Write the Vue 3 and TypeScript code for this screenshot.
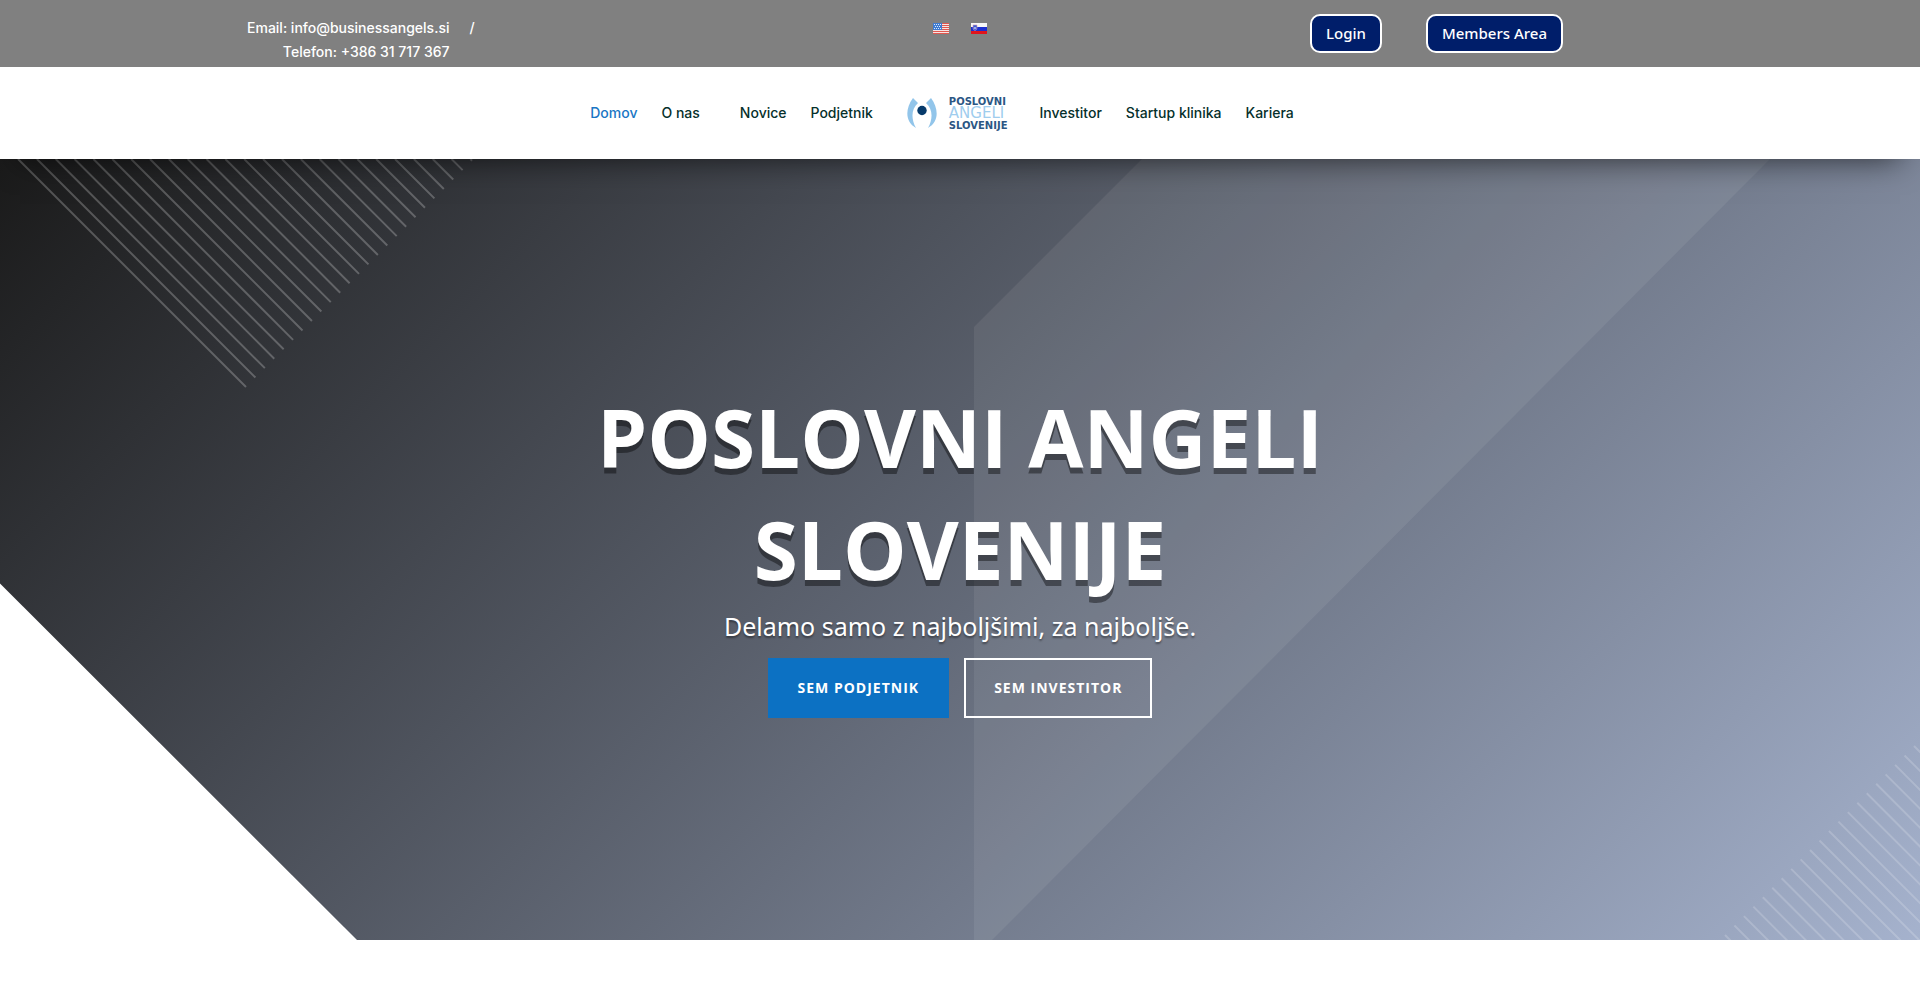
<script setup lang="ts">
interface NavLink {
  label: string
  active?: boolean
  wide?: boolean
}

const leftLinks: NavLink[] = [
  { label: 'Domov', active: true },
  { label: 'O nas', wide: true },
  { label: 'Novice' },
  { label: 'Podjetnik' },
]
const rightLinks: NavLink[] = [
  { label: 'Investitor' },
  { label: 'Startup klinika' },
  { label: 'Kariera' },
]

const topStripes = Array.from({ length: 25 }, (_, i) => {
  const start = 18 + i * 18.85
  const length = 228 - i * 9.43
  return `M${start} 0l${length} ${length}`
}).join('')

const bottomStripes = Array.from({ length: 21 }, (_, i) => {
  const x = 1914 - i * 9.45
  const y = 587 + i * 9.45
  return `M${x} ${y}l220 220`
}).join('')
</script>

<template>
  <div class="page">
    <header class="header">
      <div class="topbar">
        <div class="topbar-row">
          <div class="contact">
            <div class="contact-lines">
              <a href="#">Email: info@businessangels.si</a>
              <a href="#">Telefon: +386 31 717 367</a>
            </div>
            <span>/</span>
          </div>
          <div class="languages">
            <a href="#" aria-label="English">
              <svg class="flag" viewBox="0 0 16 11">
                <rect width="16" height="11" fill="#f6e4e4" />
                <path d="M0 .5h16M0 2.5h16M0 4.5h16M0 6.5h16M0 8.5h16M0 10.5h16" stroke="#e0584f" />
                <rect width="9" height="7" fill="#3f7bd0" />
                <path d="M1 1.5h7M2 3.5h6M1 5.5h7" stroke="#dbe9fb" stroke-dasharray="1 1" />
              </svg>
            </a>
            <a href="#" aria-label="Slovenščina">
              <svg class="flag" viewBox="0 0 16 11">
                <rect width="16" height="4" fill="#f7f7f7" />
                <rect y="4" width="16" height="4" fill="#1c2fd0" />
                <rect y="8" width="16" height="3" fill="#e0141c" />
                <path d="M2 2h4v3q0 2-2 2.500q-2-.5-2-2.500z" fill="#3b5bd6" stroke="#d8a0b0" stroke-width=".6" />
                <path d="M2.600 5.600L4 4l1.400 1.600" fill="#fff" />
              </svg>
            </a>
          </div>
          <div class="account">
            <a class="pill" href="#">Login</a>
            <a class="pill" href="#">Members Area</a>
          </div>
        </div>
      </div>
      <nav class="nav">
        <a
          v-for="link in leftLinks"
          :key="link.label"
          href="#"
          class="nav-link"
          :class="{ active: link.active, wide: link.wide }"
        >{{ link.label }}</a>
        <a class="logo" href="#">
          <svg class="logo-mark" viewBox="0 0 30 32">
            <path d="M6 1L11 6C4 12 4 22 9 31C-2 25-2 12 6 1z" fill="#92c5ea" />
            <path d="M24 1L19 6C26 12 26 22 21 31C32 25 32 12 24 1z" fill="#92c5ea" />
            <circle cx="15" cy="13.500" r="4.700" fill="#063a6b" />
          </svg>
          <span class="logo-words">
            <span class="logo-dark">POSLOVNI</span>
            <span class="logo-light">ANGELI</span>
            <span class="logo-dark">SLOVENIJE</span>
          </span>
        </a>
        <a v-for="link in rightLinks" :key="link.label" href="#" class="nav-link">{{ link.label }}</a>
      </nav>
    </header>

    <main class="hero">
      <svg class="hero-art" viewBox="0 0 1920 781" preserveAspectRatio="xMidYMid slice" aria-hidden="true">
        <path d="M974 168L1142 0H1770L992 781H974z" fill="#fff" fill-opacity=".07" />
        <path :d="topStripes" class="stripes-top" />
        <path :d="bottomStripes" class="stripes-bottom" />
        <path d="M0 424.500L357 781H0z" fill="#fff" />
      </svg>
      <div class="hero-content">
        <h1>POSLOVNI ANGELI SLOVENIJE</h1>
        <p>Delamo samo z najboljšimi, za najboljše.</p>
        <div class="hero-actions">
          <a class="cta cta-solid" href="#">SEM PODJETNIK</a>
          <a class="cta" href="#">SEM INVESTITOR</a>
        </div>
      </div>
    </main>
  </div>
</template>

<style>
body {
  margin: 0;
  background: #fff;
}
</style>

<style scoped>
.page {
  font-family: 'Open Sans', sans-serif;
}
a {
  color: inherit;
  text-decoration: none;
}
.header {
  position: relative;
  z-index: 1;
  background: #fff;
  box-shadow: 0 20px 30px -20px rgba(0, 0, 0, 0.65);
}
.topbar {
  background: #808080;
  color: #fff;
}
.topbar-row {
  display: grid;
  grid-template-columns: repeat(3, 1fr);
  column-gap: 84px;
  width: 80%;
  margin: 0 auto;
  min-height: 67px;
}
.contact {
  display: flex;
  gap: 20px;
  padding: 16px 0 0 55px;
  font: 500 14px/24px Inter, sans-serif;
}
.contact-lines {
  display: flex;
  flex-direction: column;
  align-items: flex-end;
}
.languages {
  display: flex;
  justify-content: center;
  gap: 22px;
  padding-top: 23px;
}
.flag {
  display: block;
  width: 16px;
  height: 11px;
}
.account {
  display: flex;
  align-items: flex-start;
  gap: 44px;
  padding: 14px 0 0 38px;
}
.pill {
  padding: 0 14px;
  border: 2px solid #fff;
  border-radius: 10px;
  background: #001e6a;
  font-family: 'Noto Sans', sans-serif;
  font-size: 15px;
  font-weight: 500;
  line-height: 35px;
}
.nav {
  display: flex;
  align-items: center;
  justify-content: center;
  min-height: 92px;
  gap: 24px;
  padding-right: 36px;
  font: 500 14px/20px Inter, sans-serif;
  color: #06302b;
}
.nav-link.active {
  color: #1a76c4;
}
.nav-link.wide {
  margin-right: 16px;
}
.logo {
  display: flex;
  align-items: center;
  gap: 12px;
  margin: 0 8px 0 10px;
}
.logo-mark {
  width: 30px;
  height: 32px;
}
.logo-words {
  display: flex;
  flex-direction: column;
  font-family: 'DejaVu Sans', sans-serif;
}
.logo-dark {
  font-size: 10px;
  font-weight: 700;
  line-height: 11px;
  color: #2b5684;
}
.logo-light {
  font-size: 15px;
  line-height: 13px;
  color: #9fcdee;
}
.hero {
  position: relative;
  background: linear-gradient(135deg, #1a1a1a, #a5b2cd);
  padding: 222px 24px 222px;
}
.hero-art {
  position: absolute;
  inset: 0;
  width: 100%;
  height: 100%;
}
.stripes-top {
  fill: none;
  stroke: #fff;
  stroke-opacity: 0.24;
  stroke-width: 2;
}
.stripes-bottom {
  fill: none;
  stroke: #fff;
  stroke-opacity: 0.18;
  stroke-width: 2;
}
.hero-content {
  position: relative;
  max-width: 800px;
  margin: 0 auto;
  text-align: center;
  color: #fff;
}
h1 {
  margin: 0;
  font-size: 80px;
  font-weight: 700;
  line-height: 112px;
  text-shadow: 0 6px 0 rgba(0, 0, 0, 0.4);
}
.hero-content p {
  margin: 0 0 11px;
  font-family: 'Noto Sans', sans-serif;
  font-size: 25px;
  line-height: 42px;
  text-shadow: 0 2px 2px rgba(0, 0, 0, 0.4);
}
.hero-actions {
  display: flex;
  justify-content: center;
  gap: 15px;
}
.cta {
  padding: 0 28px;
  border: 2px solid #fff;
  font-size: 14px;
  font-weight: 700;
  line-height: 56px;
  letter-spacing: 1px;
}
.cta-solid {
  border-color: #0c71c3;
  background: #0c71c3;
}
</style>
